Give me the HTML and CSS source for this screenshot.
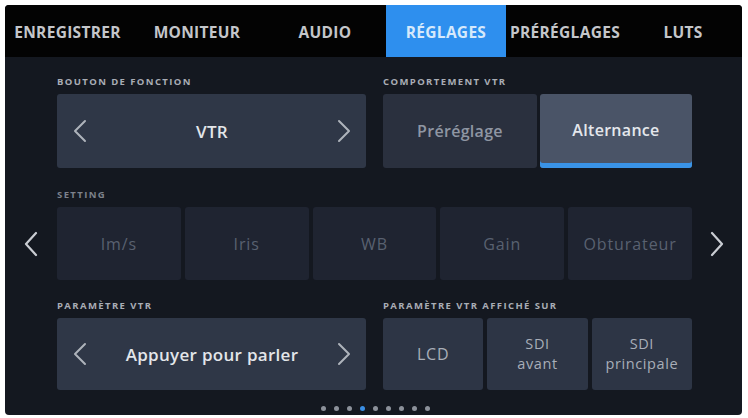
FILE: index.html
```html
<!DOCTYPE html>
<html lang="fr">
<head>
<meta charset="utf-8">
<title>Réglages</title>
<link rel="stylesheet" href="styles.css">
</head>
<body>
<div class="screen">
  <nav class="tabs">
    <div class="tab w1">ENREGISTRER</div>
    <div class="tab w2">MONITEUR</div>
    <div class="tab w3">AUDIO</div>
    <div class="tab w4 active">RÉGLAGES</div>
    <div class="tab w5">PRÉRÉGLAGES</div>
    <div class="tab w6">LUTS</div>
  </nav>
  <main class="body">
    <div class="pair first">
      <section>
        <div class="label">BOUTON DE FONCTION</div>
        <div class="box stepper h74">
          <svg class="chev" viewBox="0 0 16 24"><polyline points="13,2 3,12 13,22"/></svg>
          <span class="val">VTR</span>
          <svg class="chev" viewBox="0 0 16 24"><polyline points="3,2 13,12 3,22"/></svg>
        </div>
      </section>
      <section>
        <div class="label">COMPORTEMENT VTR</div>
        <div class="seg h74">
          <div class="opt">Préréglage</div>
          <div class="opt on">Alternance</div>
        </div>
      </section>
    </div>

    <section class="setting">
      <div class="label dim">SETTING</div>
      <div class="setrow">
        <div class="side"><svg class="chev big" viewBox="0 0 14 26"><polyline points="12,2 2,13 12,24"/></svg></div>
        <div class="five">
          <div class="cell">Im/s</div>
          <div class="cell">Iris</div>
          <div class="cell">WB</div>
          <div class="cell">Gain</div>
          <div class="cell">Obturateur</div>
        </div>
        <div class="side"><svg class="chev big" viewBox="0 0 14 26"><polyline points="2,2 12,13 2,24"/></svg></div>
      </div>
    </section>

    <div class="pair third">
      <section>
        <div class="label">PARAMÈTRE VTR</div>
        <div class="box stepper h72">
          <svg class="chev" viewBox="0 0 16 24"><polyline points="13,2 3,12 13,22"/></svg>
          <span class="val">Appuyer pour parler</span>
          <svg class="chev" viewBox="0 0 16 24"><polyline points="3,2 13,12 3,22"/></svg>
        </div>
      </section>
      <section>
        <div class="label">PARAMÈTRE VTR AFFICHÉ SUR</div>
        <div class="three h72">
          <div class="out"><span class="ln single">LCD</span></div>
          <div class="out"><span class="ln">SDI</span><span class="ln">avant</span></div>
          <div class="out"><span class="ln">SDI</span><span class="ln">principale</span></div>
        </div>
      </section>
    </div>

    <div class="dots">
      <span class="dot"></span><span class="dot"></span><span class="dot"></span>
      <span class="dot on"></span><span class="dot"></span><span class="dot"></span>
      <span class="dot"></span><span class="dot"></span><span class="dot"></span>
    </div>
  </main>
</div>
</body>
</html>
```
FILE: styles.css
```css
html, body {
  margin: 0;
  padding: 0;
  background: #ffffff;
}

body {
  font-family: "Open Sans", "Noto Sans", sans-serif;
}

.screen {
  margin: 5px 0 0 5px;
  width: 737px;
  height: 410px;
  display: flex;
  flex-direction: column;
  background: #141820;
  border-radius: 4px;
  overflow: hidden;
}

/* Tabs */
.tabs {
  height: 52px;
  background: #030303;
  display: flex;
  flex: none;
}

.tab {
  display: flex;
  align-items: center;
  justify-content: center;
  font-size: 15.5px;
  font-weight: 700;
  color: #c4c6ca;
  letter-spacing: 0.3px;
  padding-top: 1px;
}

.tab.active {
  background: #2e8fee;
  color: #d6e9fb;
}

.w1 { width: 125px; }
.w2 { width: 134px; }
.w3 { width: 122px; }
.w4 { width: 120px; }
.w5 { width: 118px; }
.w6 { width: 118px; }

/* Body */
.body {
  flex: 1;
  padding: 19px 50px 0 52px;
  display: flex;
  flex-direction: column;
}

.label {
  font-size: 9.5px;
  line-height: 12px;
  font-weight: 700;
  color: #a9adb5;
  letter-spacing: 1.4px;
  margin-bottom: 6px;
  white-space: nowrap;
}

.label.dim {
  color: #7c818b;
}

.pair {
  display: grid;
  grid-template-columns: 309px 309px;
  column-gap: 17px;
}

.setting {
  margin-top: 21px;
}

.third {
  margin-top: 20px;
}

.h74 { height: 74px; }
.h72 { height: 72px; }

.box {
  border-radius: 3px;
  background: #2f3747;
}

.stepper {
  display: flex;
  align-items: center;
  justify-content: space-between;
  padding: 0 14px 0 15px;
}

.chev {
  width: 16px;
  height: 24px;
  fill: none;
  stroke: #aeb3bb;
  stroke-width: 2;
  stroke-linecap: round;
  stroke-linejoin: round;
}

.chev.big {
  width: 14px;
  height: 26px;
  stroke: #c9ccd2;
  stroke-width: 2.2;
}

.val {
  font-size: 17px;
  font-weight: 600;
  color: #e3e6ea;
  letter-spacing: 0.3px;
}

.seg {
  display: grid;
  grid-template-columns: 154px 1fr;
  column-gap: 3px;
}

.opt {
  border-radius: 3px;
  background: #2a303e;
  display: flex;
  align-items: center;
  justify-content: center;
  font-size: 16px;
  font-weight: 600;
  color: #8f96a3;
  letter-spacing: 0.3px;
}

.opt.on {
  background: #4a5467;
  color: #e4e7ec;
  box-shadow: inset 0 -5px 0 #3a93e6;
  padding-bottom: 2px;
}

/* Setting row */
.setrow {
  margin: 0 -50px 0 -52px;
  display: grid;
  grid-template-columns: 52px 1fr 50px;
  height: 73px;
}

.side {
  display: flex;
  align-items: center;
  justify-content: center;
}

.five {
  display: grid;
  grid-template-columns: repeat(5, 1fr);
  column-gap: 4px;
}

.cell {
  border-radius: 3px;
  background: #1f2431;
  display: flex;
  align-items: center;
  justify-content: center;
  font-size: 16px;
  color: #596170;
  letter-spacing: 0.9px;
}

/* Outputs */
.three {
  display: grid;
  grid-template-columns: repeat(3, 1fr);
  column-gap: 4px;
}

.out {
  border-radius: 3px;
  background: #2d3545;
  display: flex;
  flex-direction: column;
  align-items: center;
  justify-content: center;
  text-align: center;
  color: #a8aeb8;
}

.ln {
  display: block;
  font-size: 14.5px;
  line-height: 20px;
  letter-spacing: 0.6px;
}

.ln.single {
  font-size: 16px;
  line-height: 22px;
  letter-spacing: 0.8px;
}

/* Page dots */
.dots {
  margin-top: 16px;
  display: flex;
  justify-content: center;
  gap: 8px;
  padding-left: 1px;
}

.dot {
  width: 5px;
  height: 5px;
  border-radius: 50%;
  background: #8c919a;
}

.dot.on {
  background: #3a8ee4;
}
```
